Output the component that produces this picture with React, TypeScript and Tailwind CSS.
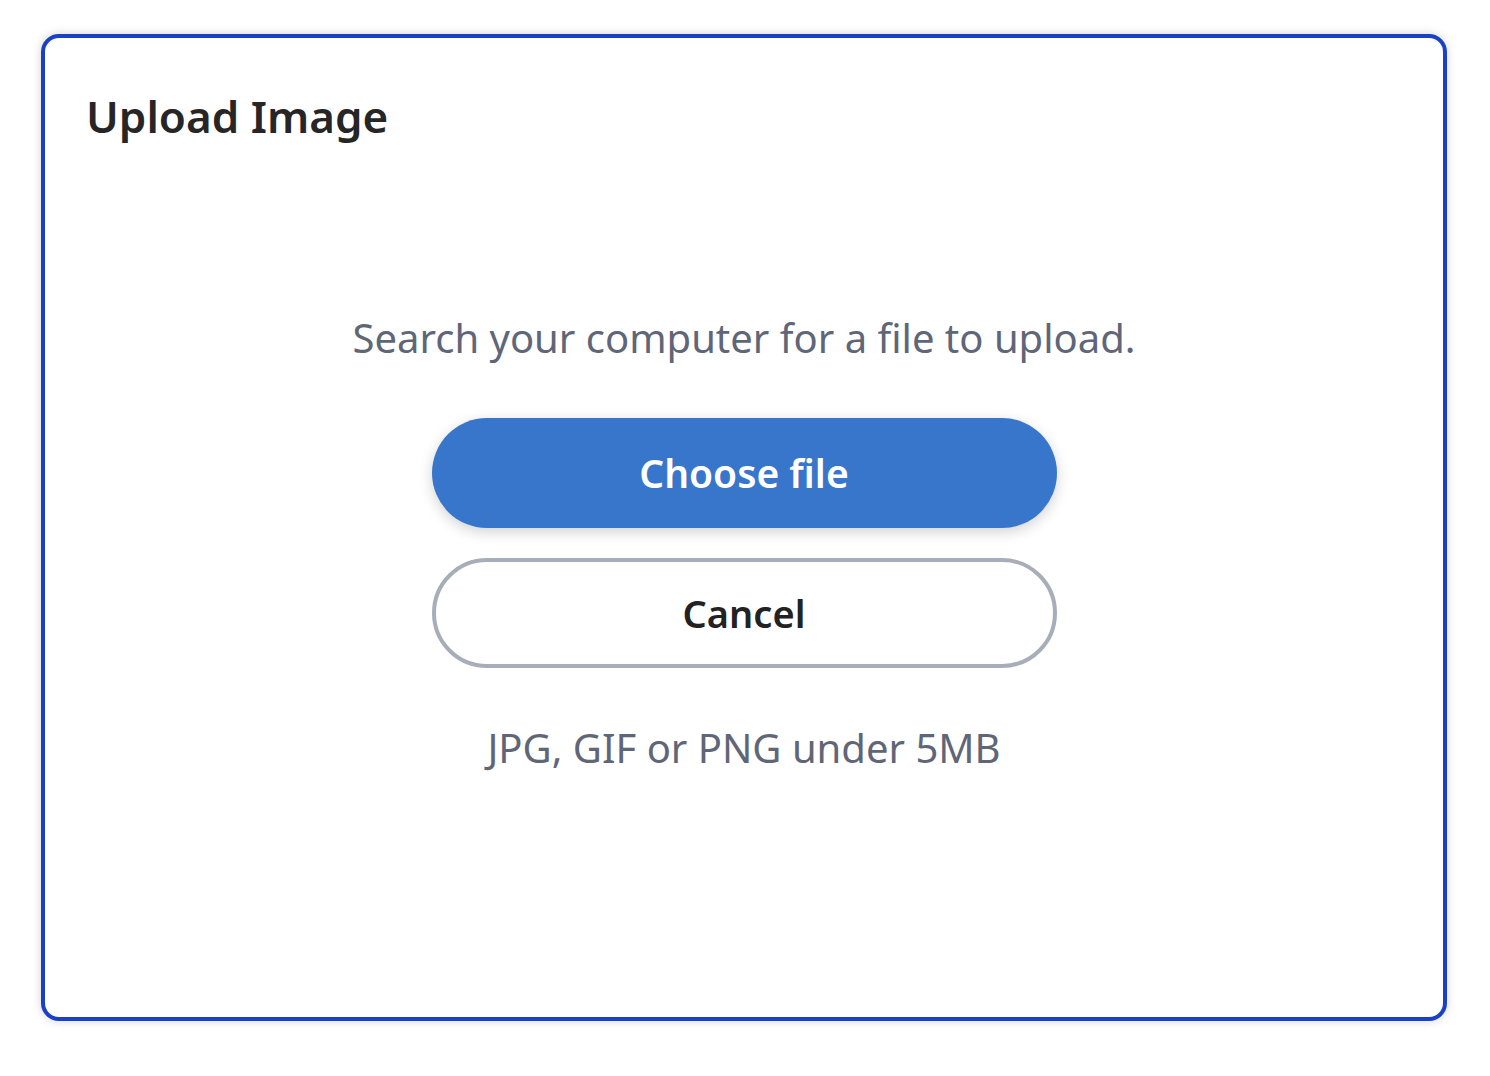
import React from 'react';

export default function App() {
  return (
    <div className="min-h-screen bg-white pt-[34px] pl-[41px]" style={{ fontFamily: '"Noto Sans", sans-serif' }}>
      <div className="w-[1406px] h-[987px] rounded-[18px] border-[4px] border-[#1a40c6] bg-white shadow-[0_0_10px_rgba(0,0,0,0.18)] flex flex-col">
        <h1 className="pl-[41px] pt-[52px] text-[44px] leading-[52px] font-semibold text-[#262626]">Upload Image</h1>

        <div className="flex flex-col items-center mt-[170px]">
          <p className="text-[40px] leading-[52px] text-[#5f6677]">Search your computer for a file to upload.</p>

          <button className="mt-[54px] w-[625px] h-[110px] rounded-full bg-[#3876cb] text-white text-[39px] font-semibold shadow-[0_4px_14px_rgba(0,0,0,0.18)]">
            Choose file
          </button>

          <button className="mt-[30px] w-[625px] h-[110px] rounded-full border-4 border-[#a8aeb9] bg-white text-[#222] text-[38px] font-semibold">
            Cancel
          </button>

          <p className="mt-[54px] text-[40px] leading-[52px] text-[#5f6677]">JPG, GIF or PNG under 5MB</p>
        </div>
      </div>
    </div>
  );
}
